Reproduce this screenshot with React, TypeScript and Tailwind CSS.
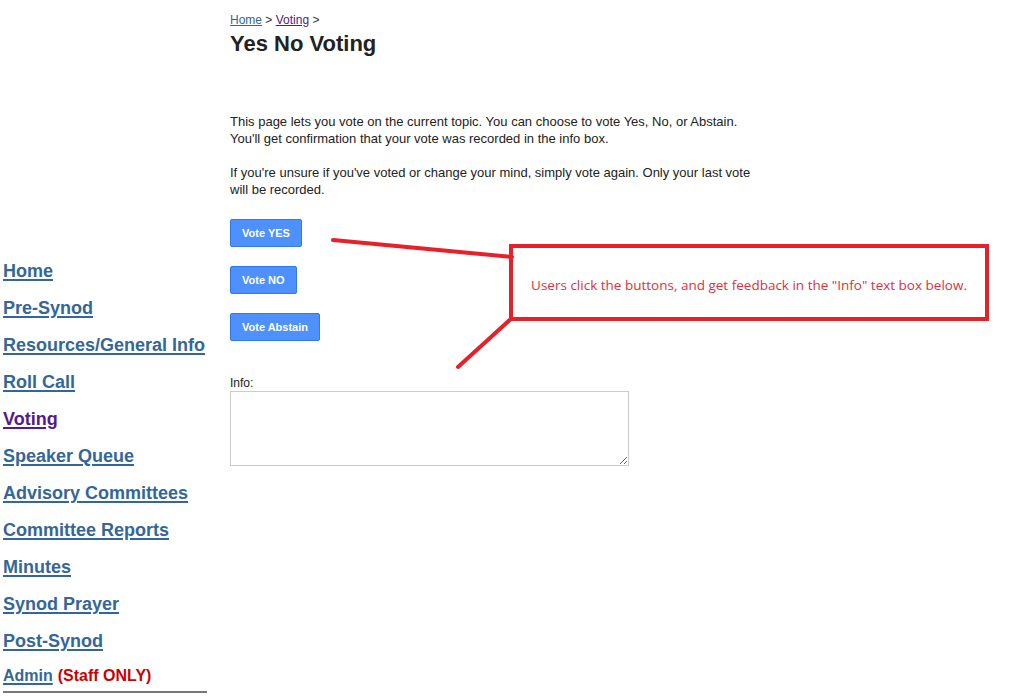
const navItems = [
  { label: "Home", visited: false },
  { label: "Pre-Synod", visited: false },
  { label: "Resources/General Info", visited: false },
  { label: "Roll Call", visited: false },
  { label: "Voting", visited: true },
  { label: "Speaker Queue", visited: false },
  { label: "Advisory Committees", visited: false },
  { label: "Committee Reports", visited: false },
  { label: "Minutes", visited: false },
  { label: "Synod Prayer", visited: false },
  { label: "Post-Synod", visited: false },
];

function VoteButton({ label }: { label: string }) {
  return (
    <button className="h-[28px] px-[11px] rounded-[2px] border border-[#3079ed] bg-[#4d90fe] text-white text-[11px] font-bold leading-none">
      {label}
    </button>
  );
}

export default function App() {
  return (
    <div
      className="relative w-[1034px] h-[697px] bg-white text-[#222] overflow-hidden"
      style={{ fontFamily: '"Liberation Sans", Arial, sans-serif' }}
    >
      <div className="flex">
        {/* Sidebar */}
        <div className="w-[230px] shrink-0 pt-[253px] pl-[3px]">
          <ul className="w-[204px]">
            {navItems.map((item) => (
              <li key={item.label} className="h-[37px] flex items-center">
                <a
                  href="#"
                  className={`text-[18px] font-bold underline decoration-2 underline-offset-2 ${
                    item.visited ? "text-[#551a8b]" : "text-[#336699]"
                  }`}
                >
                  {item.label}
                </a>
              </li>
            ))}
            <li className="h-[31px] flex items-center text-[16px] font-bold">
              <a href="#" className="text-[#336699] underline decoration-2 underline-offset-2">
                Admin
              </a>
              <span className="ml-[5px] text-[#cc0000]">(Staff ONLY)</span>
            </li>
          </ul>
          <div className="w-[204px] h-[2px] bg-[#777]" />
        </div>

        {/* Main */}
        <div className="pt-[12px] w-[530px]">
          <div className="text-[12px] text-[#333] leading-[16px]">
            <a href="#" className="text-[#336699] underline">Home</a>
            {" > "}
            <a href="#" className="text-[#551a8b] underline">Voting</a>
            {" >"}
          </div>
          <h1 className="text-[22px] font-bold leading-[28px] mt-[2px]">Yes No Voting</h1>

          <p className="text-[13px] leading-[17px] mt-[55px]">
            This page lets you vote on the current topic. You can choose to vote Yes, No, or Abstain.
            You'll get confirmation that your vote was recorded in the info box.
          </p>
          <p className="text-[13px] leading-[17px] mt-[17px]">
            If you're unsure if you've voted or change your mind, simply vote again. Only your last vote
            will be recorded.
          </p>

          <div className="flex flex-col items-start gap-[19px] mt-[21px]">
            <VoteButton label="Vote YES" />
            <VoteButton label="Vote NO" />
            <VoteButton label="Vote Abstain" />
          </div>

          <div className="mt-[35px] text-[12px] leading-[14px]">Info:</div>
          <textarea className="block mt-[1px] w-[399px] h-[75px] border border-[#ccc] resize" />
        </div>
      </div>

      {/* Annotation overlay */}
      <svg className="absolute left-0 top-0 pointer-events-none" width="1034" height="697">
        <line x1="333" y1="240" x2="512" y2="257" stroke="#e8202a" strokeWidth="4" strokeLinecap="round" />
        <line x1="458" y1="367" x2="512" y2="318" stroke="#e8202a" strokeWidth="4" strokeLinecap="round" />
      </svg>
      <div className="absolute left-[509px] top-[244px] w-[480px] h-[77px] border-[4px] border-[#e8202a] flex items-center justify-center pt-[6px]">
        <span className="text-[13.5px] text-[#e0303a]" style={{ fontFamily: '"Open Sans", sans-serif' }}>
          Users click the buttons, and get feedback in the "Info" text box below.
        </span>
      </div>
    </div>
  );
}
